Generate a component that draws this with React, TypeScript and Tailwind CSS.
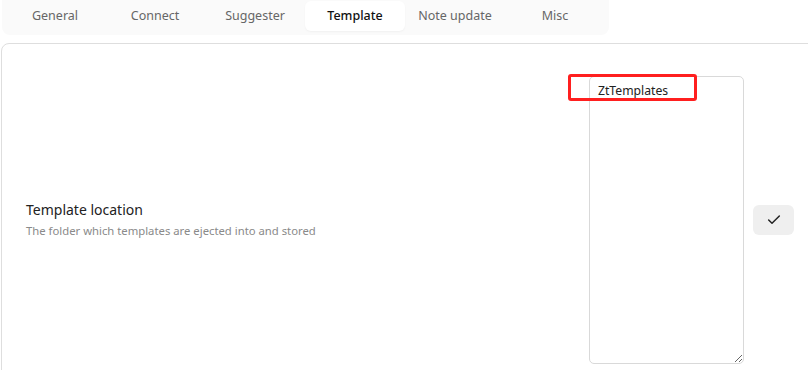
import { Check } from 'lucide-react'

const tabs = ['General', 'Connect', 'Suggester', 'Template', 'Note update', 'Misc']

export default function App() {
  return (
    <div
      className="w-[808px] h-[370px] overflow-hidden bg-white"
      style={{ fontFamily: '"Segoe UI", "Noto Sans", sans-serif' }}
    >
      {/* Tabs */}
      <div className="ml-[2px] w-[607px] h-[35px] bg-[#fafafa] rounded-b-lg flex items-start pl-[3px] pt-[1px]">
        {tabs.map((t) => (
          <div
            key={t}
            className={
              t === 'Template'
                ? 'w-[100px] h-[30px] flex items-center justify-center text-[12.5px] text-[#111] bg-white rounded-md shadow-[0_1px_2px_rgba(0,0,0,0.04)] font-medium'
                : 'w-[100px] h-[30px] flex items-center justify-center text-[12.5px] text-[#666]'
            }
          >
            {t}
          </div>
        ))}
      </div>

      {/* Panel */}
      <div className="mt-[8px] ml-[1px] w-[830px] h-[340px] border border-[#dedede] rounded-tl-lg pt-[32px] pl-[24px] pr-[36px]">
        <div className="flex items-center justify-between">
          <div className="flex flex-col">
            <div className="text-[14px] text-[#222] leading-[20px]">Template location</div>
            <div className="text-[11.3px] text-[#8a8a8a] leading-[18px] mt-[2px]">
              The folder which templates are ejected into and stored
            </div>
          </div>
          <div className="flex items-center gap-[9px]">
            <div className="relative">
              <textarea
                defaultValue="ZtTemplates"
                className="block w-[155px] h-[288px] border border-[#d9d9d9] rounded-[5px] px-[8px] py-[4px] text-[12.2px] leading-[20px] text-[#222] outline-none"
              />
              <div className="absolute left-[-21px] top-[-2px] w-[129px] h-[27px] border-[3px] border-[#ff1f1f] rounded-[3px] pointer-events-none" />
            </div>
            <button className="w-[41px] h-[30px] bg-[#efefef] rounded-md flex items-center justify-center text-[#222]">
              <Check className="w-[16px] h-[16px]" strokeWidth={2.2} />
            </button>
          </div>
        </div>
      </div>
    </div>
  )
}
